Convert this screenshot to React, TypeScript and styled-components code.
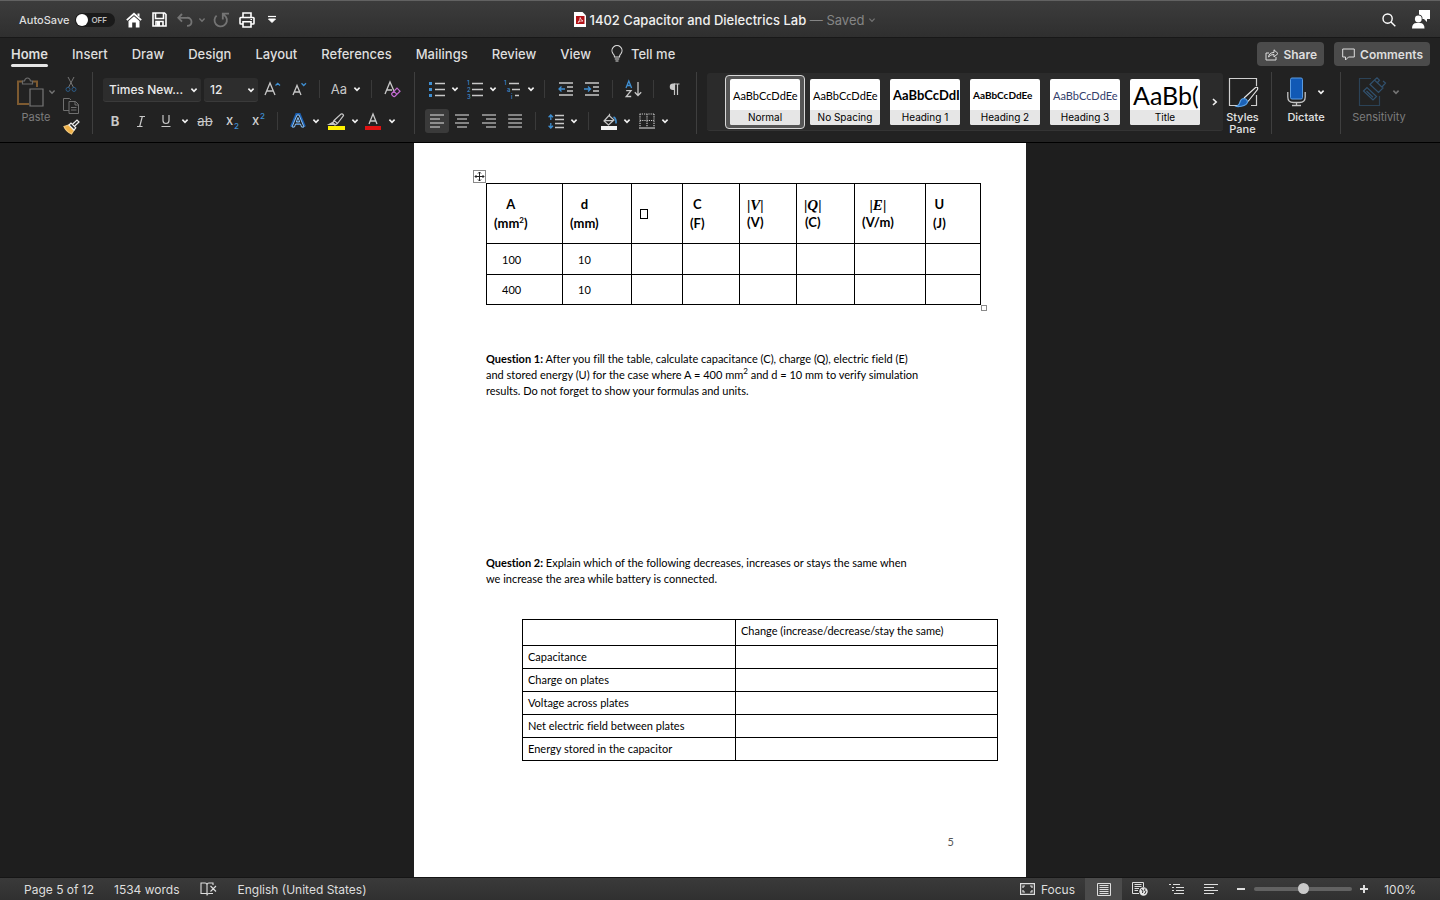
import React from "react";
import styled, { createGlobalStyle, css } from "styled-components";

const GlobalStyle = createGlobalStyle`
  *, *::before, *::after { box-sizing: border-box; }
  body { margin: 0; background: #1e1e1e; }
  button, select, input { font: inherit; color: inherit; margin: 0; }
  button { background: none; border: 0; padding: 0; white-space: nowrap; }
  svg { overflow: visible; flex: none; }
`;

const BLUE = "#3f8fd2";

const Window = styled.div`
  min-height: 100vh;
  display: flex;
  flex-direction: column;
  font-family: Inter, "Liberation Sans", sans-serif;
  color: #dedede;
`;

/* ---------- title bar ---------- */

const TitleBar = styled.header`
  height: 38px;
  display: grid;
  grid-template-columns: 1fr auto 1fr;
  align-items: center;
  padding: 1px 9px 0 19px;
  background: linear-gradient(#3c3c3c, #2f2f2f);
  border-top: 1px solid #626262;
  border-bottom: 1px solid #181818;
`;

const QuickAccess = styled.div`
  display: flex;
  align-items: center;
  gap: 8px;
`;

const AutoSave = styled.label`
  display: flex;
  align-items: center;
  gap: 6px;
  font-size: 11px;
  font-weight: 500;
  margin-right: 2px;
`;

const Toggle = styled.span`
  width: 40px;
  height: 14px;
  padding-left: 1px;
  border-radius: 7px;
  background: #1a1a1a;
  display: flex;
  align-items: center;
  gap: 3px;
  font-size: 8px;
  font-weight: 600;
  color: #c0c0c0;
  &::before {
    content: "";
    width: 12px;
    height: 12px;
    border-radius: 50%;
    background: #fff;
  }
`;

const HiddenCheck = styled.input`
  position: absolute;
  opacity: 0;
  pointer-events: none;
`;

const IconButton = styled.button<{ $w?: number; $dim?: boolean }>`
  width: ${(p) => p.$w ?? 20}px;
  height: 20px;
  display: flex;
  align-items: center;
  justify-content: center;
  color: ${(p) => (p.$dim ? "#747474" : "#ffffff")};
`;

const QuickIcons = styled.div`
  display: flex;
  align-items: center;
`;

const DocTitle = styled.h1`
  margin: 0;
  display: flex;
  align-items: center;
  gap: 4px;
  font-size: 13px;
  font-weight: 500;
  color: #f0f0f0;
  white-space: nowrap;
`;

const Saved = styled.span`
  color: #858585;
  font-weight: 400;
`;

const TitleRight = styled.div`
  display: flex;
  align-items: center;
  justify-content: flex-end;
  gap: 12px;
`;

/* ---------- ribbon ---------- */

const TabBar = styled.nav`
  height: 30px;
  display: flex;
  align-items: flex-start;
  padding: 0 10px 0 11px;
  background: #222;
`;

const TabList = styled.div`
  display: flex;
  gap: 24px;
`;

const Tab = styled.button<{ $active?: boolean }>`
  position: relative;
  height: 31px;
  font-size: 13px;
  font-weight: ${(p) => (p.$active ? 600 : 500)};
  display: flex;
  align-items: center;
  gap: 8px;
  ${(p) =>
    p.$active &&
    css`
      &::after {
        content: "";
        position: absolute;
        inset: auto 0 2px;
        height: 3px;
        border-radius: 2px;
        background: #e6e6e6;
      }
    `}
`;

const TellMe = styled(Tab)`
  margin-left: 20px;
`;

const TabActions = styled.div`
  display: flex;
  gap: 10px;
  margin: 4px 0 0 auto;
`;

const PillButton = styled.button`
  height: 24px;
  padding: 0 7px 0 8px;
  border-radius: 4px;
  background: #4b4b4b;
  font-size: 12px;
  font-weight: 600;
  display: flex;
  align-items: center;
  gap: 5px;
`;

const Ribbon = styled.div`
  height: 75px;
  display: flex;
  align-items: flex-start;
  padding-top: 4px;
  background: #222;
  border-bottom: 1px solid #000;
`;

const GroupLine = styled.div`
  width: 1px;
  height: 62px;
  flex: none;
  background: #3f3f3f;
`;

const PasteGroup = styled.div`
  width: 92px;
  flex: none;
  display: flex;
  justify-content: space-between;
  padding: 0 9px 0 16px;
`;

const BigTool = styled.button<{ $w?: number; $dim?: boolean }>`
  width: ${(p) => (p.$w ? `${p.$w}px` : "auto")};
  flex: none;
  display: flex;
  flex-direction: column;
  align-items: center;
  align-self: flex-start;
  gap: 4px;
  padding-top: 5px;
  font-size: 11px;
  font-weight: ${(p) => (p.$dim ? 400 : 500)};
  line-height: 12px;
  color: ${(p) => (p.$dim ? "#7d7d7d" : "#e4e4e4")};
`;

const IconRow = styled.span<{ $gap?: number }>`
  display: flex;
  align-items: center;
  gap: ${(p) => p.$gap ?? 4}px;
`;

const ClipTools = styled.div`
  display: flex;
  flex-direction: column;
  padding-top: 2px;
`;

const ToolGroup = styled.div<{ $w: number }>`
  width: ${(p) => p.$w}px;
  flex: none;
  padding: 1px 0 0 10px;
`;

const ToolRow = styled.div`
  height: 32px;
  display: flex;
  align-items: center;
`;

const Tool = styled.button<{ $w: number; $on?: boolean }>`
  width: ${(p) => p.$w}px;
  height: 24px;
  flex: none;
  display: flex;
  align-items: center;
  justify-content: center;
  border-radius: 3px;
  font-size: 13px;
  color: #c8c8c8;
  background: ${(p) => (p.$on ? "#3a3a3a" : "none")};
`;

const ClipTool = styled(Tool)`
  height: 21px;
`;

const SmallLine = styled.span<{ $w: number }>`
  width: ${(p) => p.$w}px;
  height: 18px;
  flex: none;
  background: linear-gradient(#3a3a3a, #3a3a3a) center / 1px 100% no-repeat;
`;

const SelectBox = styled.label<{ $w: number }>`
  position: relative;
  width: ${(p) => p.$w}px;
  height: 23px;
  margin-right: 3px;
  flex: none;
  border-radius: 3px;
  background: #2d2d2d;
  box-shadow: 0 1px #3a3a3a;
  &:nth-of-type(2) { margin-right: 0; }
  & > svg {
    position: absolute;
    right: 3px;
    top: 9px;
    pointer-events: none;
  }
`;

const Select = styled.select`
  appearance: none;
  width: 100%;
  height: 100%;
  padding: 0 0 0 6px;
  border: 0;
  background: transparent;
  font-size: 12px;
  font-weight: 500;
  color: #eaeaea;
`;

const Gallery = styled.div`
  flex: 0 1 516px;
  height: 58px;
  margin: 1px 0 0 10px;
  padding: 0 5px 0 18px;
  display: flex;
  align-items: center;
  justify-content: space-between;
  border-radius: 3px;
  background: #2b2b2b;
  border-bottom: 1px solid #343434;
`;

const Cards = styled.div`
  display: flex;
  min-width: 0;
  overflow: hidden;
`;

const StyleCard = styled.button<{ $active?: boolean }>`
  width: 80px;
  height: 54px;
  flex: none;
  padding: 3px;
  border: 1px solid ${(p) => (p.$active ? "#d8d8d8" : "transparent")};
  border-radius: 4px;
  background: ${(p) => (p.$active ? "#555" : "none")};
`;

const CardFace = styled.span`
  height: 46px;
  margin: 0 1px;
  display: flex;
  flex-direction: column;
  border-radius: 2px;
  overflow: hidden;
  background: #fff;
  color: #000;
`;

const Sample = styled.span<{ $size: number; $bold?: boolean; $color?: string }>`
  height: 31px;
  padding-left: 3px;
  overflow: hidden;
  text-align: left;
  line-height: 33px;
  font-family: Lato, sans-serif;
  font-size: ${(p) => p.$size}px;
  font-weight: ${(p) => (p.$bold ? 700 : 400)};
  color: ${(p) => p.$color ?? "#000"};
`;

const CardLabel = styled.span`
  height: 15px;
  background: #e6e6e6;
  font-size: 10px;
  line-height: 15px;
  text-align: center;
`;

const RightTools = styled.div`
  flex: none;
  display: flex;
`;

const StylesPaneTool = styled(BigTool)`
  margin-right: 9px;
`;

/* ---------- document ---------- */

const Desk = styled.main`
  flex: 1;
  display: flex;
  justify-content: center;
  background: #1e1e1e;
`;

const Page = styled.article`
  width: 612px;
  padding: 40px 72px 0;
  background: #fff;
  color: #000;
  font-family: Lato, sans-serif;
  font-size: 11px;
  line-height: 16px;
  font-variant-ligatures: none;
`;

const TableWrap = styled.div`
  position: relative;
  width: 495px;
`;

const MoveHandle = styled.span`
  position: absolute;
  left: -13px;
  top: -13px;
  width: 13px;
  height: 13px;
  border: 1px solid #8a8a8a;
  display: flex;
  background: #fff;
`;

const SizeHandle = styled.span`
  position: absolute;
  right: -6px;
  bottom: -6px;
  width: 6px;
  height: 6px;
  border: 1px solid #8a8a8a;
  background: #fff;
`;

const DataTable = styled.table`
  width: 495px;
  table-layout: fixed;
  border-collapse: collapse;
  th, td { border: 1px solid #000; }
  th {
    height: 60px;
    padding: 1px 0 0 7px;
    text-align: left;
    font-size: 13px;
    line-height: 19px;
  }
  td { height: 31px; padding: 1px 0 0 15px; }
  tr:last-child td { height: 30px; }
`;

const Stack = styled.span<{ $tight?: boolean }>`
  display: inline-block;
  text-align: center;
  vertical-align: middle;
  line-height: ${(p) => (p.$tight ? 17 : 19)}px;
`;

const MathSymbol = styled.span`
  font-family: "Liberation Serif", serif;
  font-size: 15px;
  i { font-weight: 700; }
`;

const Missing = styled.span`
  display: block;
  width: 8px;
  height: 10px;
  margin-left: 1px;
  border: 1px solid #000;
`;

const Question = styled.p<{ $gap: number }>`
  margin: ${(p) => p.$gap}px 0 0;
  white-space: nowrap;
`;

const Sup = styled.sup`
  font-size: 8px;
  line-height: 0;
`;

const ChangeTable = styled.table`
  width: 476px;
  margin: 32px 0 0 36px;
  table-layout: fixed;
  border-collapse: collapse;
  th, td {
    height: 23px;
    padding: 0 5px;
    border: 1px solid #000;
    text-align: left;
    font-weight: 400;
    line-height: 16px;
  }
  thead th { height: 26px; padding-bottom: 4px; }
  tbody tr:nth-child(3) th { height: 22px; }
  tbody tr:last-child th { height: 21px; }
`;

const PageNumber = styled.footer`
  margin-top: 73px;
  text-align: right;
  color: #555;
`;

/* ---------- status bar ---------- */

const StatusBar = styled.footer`
  height: 23px;
  display: flex;
  align-items: center;
  justify-content: space-between;
  padding: 0 24px;
  background: linear-gradient(#3a3a3a, #303030);
  border-top: 1px solid #151515;
  font-size: 12px;
`;

const StatusSide = styled.div<{ $gap?: number }>`
  display: flex;
  align-items: center;
  gap: ${(p) => p.$gap ?? 0}px;
  height: 100%;
`;

const StatusButton = styled.button<{ $w?: number; $on?: boolean }>`
  width: ${(p) => (p.$w ? `${p.$w}px` : "auto")};
  height: 100%;
  display: flex;
  align-items: center;
  justify-content: center;
  gap: 6px;
  background: ${(p) => (p.$on ? "#4b4b4b" : "none")};
`;

const FocusButton = styled(StatusButton)`
  margin-right: 10px;
`;

const Zoom = styled.input`
  appearance: none;
  width: 98px;
  height: 12px;
  background: transparent;
  &::-webkit-slider-runnable-track {
    height: 4px;
    border-radius: 2px;
    background: #626262;
  }
  &::-webkit-slider-thumb {
    appearance: none;
    width: 11px;
    height: 11px;
    margin-top: -4px;
    border-radius: 50%;
    background: #c9c9c9;
  }
`;

const ZoomValue = styled.button`
  width: 40px;
  text-align: right;
`;

/* ---------- icons ---------- */

type IconProps = { w: number; h: number; sw?: number; children: React.ReactNode };

const Icon = ({ w, h, sw = 1, children }: IconProps) => (
  <svg width={w} height={h} viewBox={`0 0 ${w} ${h}`} fill="none" stroke="currentColor" strokeWidth={sw} aria-hidden="true">
    {children}
  </svg>
);

const Chevron = ({ color = "#f0f0f0", sw = 1.6 }: { color?: string; sw?: number }) => (
  <Icon w={8} h={6} sw={sw}>
    <path d="M1.4 1.6 4 4.3 6.6 1.6" stroke={color} />
  </Icon>
);

const Drop = ({ w, label }: { w: number; label: string }) => (
  <Tool $w={w} aria-label={label}>
    <Chevron />
  </Tool>
);

const Lines = ({ rows }: { rows: [number, number][] }) => (
  <Icon w={16} h={16} sw={1.2}>
    {rows.map(([a, b], i) => (
      <path key={i} d={`M${a} ${2 + i * 4}H${b}`} />
    ))}
  </Icon>
);

type LetterProps = { x: number; y: number; size: number; color?: string; children: string };

const Letter = ({ x, y, size, color = BLUE, children }: LetterProps) => (
  <text x={x} y={y} fontSize={size} fontWeight={500} fill={color} stroke="none">
    {children}
  </text>
);

const styleCards = [
  { name: "Normal", sample: "AaBbCcDdEe", size: 11, active: true },
  { name: "No Spacing", sample: "AaBbCcDdEe", size: 11 },
  { name: "Heading 1", sample: "AaBbCcDdI", size: 13, bold: true },
  { name: "Heading 2", sample: "AaBbCcDdEe", size: 10, bold: true },
  { name: "Heading 3", sample: "AaBbCcDdEe", size: 11, color: "#34406b" },
  { name: "Title", sample: "AaBb(", size: 25 },
];

const tabs = ["Home", "Insert", "Draw", "Design", "Layout", "References", "Mailings", "Review", "View"];
const columns = [76, 69, 51, 57, 57, 58, 71, 55];
const changes = ["Capacitance", "Charge on plates", "Voltage across plates", "Net electric field between plates", "Energy stored in the capacitor"];

const ClipboardTools = () => (
  <PasteGroup>
    <BigTool $dim>
      <IconRow>
        <Icon w={28} h={30} sw={1.2}>
          <path d="M7 4.5H2V27H13M17 4.5H21V10" stroke="#7d5a30" strokeWidth="2" />
          <path d="M6.5 7V4H8.5Q9 1 11.5 1T14.5 4H16.5V7Z" stroke="#6a6a6a" />
          <path d="M14 12H27V29H14Z" stroke="#777" />
        </Icon>
        <Chevron color="#747474" sw={1.4} />
      </IconRow>
      Paste
    </BigTool>
    <ClipTools>
      <ClipTool $w={24} aria-label="Cut">
        <Icon w={12} h={15}>
          <path d="M3 0 8.6 10.6M9 0 3.4 10.6" stroke="#777" />
          <circle cx="3" cy="12.4" r="2" stroke="#2c5c88" />
          <circle cx="9" cy="12.4" r="2" stroke="#2c5c88" />
        </Icon>
      </ClipTool>
      <ClipTool $w={24} aria-label="Copy">
        <Icon w={16} h={16}>
          <path d="M6 12.5H.5V.5H6.5L8 2" stroke="#707070" />
          <path d="M6 3.5H12.5L15.5 6.5V15.5H6ZM12 3.5V7H15.5M8 9.5H13.5M8 12H13.5" stroke="#707070" />
        </Icon>
      </ClipTool>
      <ClipTool $w={24} aria-label="Format painter">
        <Icon w={17} h={16} sw={1.2}>
          <path d="M1 7.5 6 6 11 11 8.5 15Q3 12.5 1 7.5Z" fill="#efb046" stroke="#f0c77c" />
          <path d="M6 6 8 4 12.8 8.8 11 11Z" fill="#222" stroke="#eee" />
          <path d="M9.5 5.3 14 1 16 3 11.5 7.3" stroke="#eee" />
        </Icon>
      </ClipTool>
    </ClipTools>
  </PasteGroup>
);

const FontTools = () => (
  <ToolGroup $w={321}>
    <ToolRow>
      <SelectBox $w={98}>
        <Select aria-label="Font" defaultValue="Times New...">
          <option>Times New...</option>
        </Select>
        <Chevron />
      </SelectBox>
      <SelectBox $w={54}>
        <Select aria-label="Font size" defaultValue="12">
          <option>12</option>
        </Select>
        <Chevron />
      </SelectBox>
      <Tool $w={28} aria-label="Increase font size">
        <Icon w={17} h={16} sw={1.3}>
          <path d="M1 14 6 2 11 14M2.8 10H9.2" />
          <path d="M11.5 4.5 13.7 2.3 16 4.5" stroke={BLUE} />
        </Icon>
      </Tool>
      <Tool $w={26} aria-label="Decrease font size">
        <Icon w={15} h={16} sw={1.3}>
          <path d="M1 14 5 4.5 9 14M2.5 11H7.5" />
          <path d="M9.5 2.3 11.7 4.5 14 2.3" stroke={BLUE} />
        </Icon>
      </Tool>
      <SmallLine $w={14} />
      <Tool $w={26} aria-label="Change case">Aa</Tool>
      <Drop w={10} label="Change case options" />
      <SmallLine $w={18} />
      <Tool $w={24} aria-label="Clear formatting">
        <Icon w={17} h={17} sw={1.3}>
          <path d="M1 13 6 1 10 10M2.8 9H8" />
          <path d="M7.7 12.5 13 7.2 16 10.2 10.7 15.5Q9.8 16 9 15L7.7 13.6ZM10 10.4 13 13.4" stroke="#c36ad2" strokeWidth="1.2" />
        </Icon>
      </Tool>
    </ToolRow>
    <ToolRow>
      <Tool $w={24} aria-label="Bold"><b>B</b></Tool>
      <Tool $w={28} aria-label="Italic">
        <Icon w={10} h={13} sw={1.2}><path d="M3.5 1.5H9M1 11.5H6.5M6.3 1.5 3.7 11.5" /></Icon>
      </Tool>
      <Tool $w={22} aria-label="Underline">
        <Icon w={10} h={14} sw={1.2}><path d="M2 1V6.5a3 3 0 0 0 6 0V1M.5 12.5h9" /></Icon>
      </Tool>
      <Drop w={16} label="Underline options" />
      <Tool $w={24} aria-label="Strikethrough"><s>ab</s></Tool>
      <Tool $w={30} aria-label="Subscript">
        <Icon w={14} h={18}>
          <Letter x={1} y={13} size={13} color="#d0d0d0">x</Letter>
          <Letter x={9} y={17} size={8}>2</Letter>
        </Icon>
      </Tool>
      <Tool $w={22} aria-label="Superscript">
        <Icon w={14} h={18}>
          <Letter x={1} y={13} size={13} color="#d0d0d0">x</Letter>
          <Letter x={9} y={7} size={8}>2</Letter>
        </Icon>
      </Tool>
      <SmallLine $w={16} />
      <Tool $w={26} aria-label="Text effects">
        <Icon w={16} h={16}>
          <path d="M2 14 7 2H9L14 14M4.5 10H11.5" stroke="#1c5fb0" strokeWidth="4" />
          <path d="M2 14 7 2H9L14 14H11.5L10.5 11H5.5L4.5 14ZM6.3 9H9.7L8 4.5Z" fill="#222" stroke="#8cc0f0" />
        </Icon>
      </Tool>
      <Drop w={10} label="Text effects options" />
      <Tool $w={30} aria-label="Highlight">
        <Icon w={17} h={17} sw={1.2}>
          <path d="M6 7.5 13 1Q15 .5 15.5 2.5L9.5 10.5ZM6 7.5 4.5 10.5 7 12 9.5 10.5" />
          <path d="M1 11.5 4.5 9.5 7 11.5Z" fill="currentColor" />
          <path d="M0 13H17V17H0Z" fill="#fff200" stroke="none" />
        </Icon>
      </Tool>
      <Drop w={8} label="Highlight colors" />
      <Tool $w={28} aria-label="Font color">
        <Icon w={16} h={17} sw={1.3}>
          <path d="M4 11 8 1 12 11M5.3 8H10.7" />
          <path d="M0 13H16V17H0Z" fill="#e01212" stroke="none" />
        </Icon>
      </Tool>
      <Drop w={10} label="Font colors" />
    </ToolRow>
  </ToolGroup>
);

const ParagraphTools = () => (
  <ToolGroup $w={281}>
    <ToolRow>
      <Tool $w={24} aria-label="Bullets">
        <Icon w={16} h={17} sw={1.3}>
          <path d="M6 2.5H16M6 8.5H16M6 14.5H16" />
          <path d="M0 1H3V4H0ZM0 7H3V10H0ZM0 13H3V16H0Z" fill={BLUE} stroke="none" />
        </Icon>
      </Tool>
      <Drop w={12} label="Bullet options" />
      <Tool $w={28} aria-label="Numbering">
        <Icon w={16} h={17} sw={1.3}>
          <path d="M5 2.5H16M5 8.5H16M5 14.5H16" />
          <Letter x={0} y={4} size={6}>1</Letter>
          <Letter x={0} y={11} size={6}>2</Letter>
          <Letter x={0} y={18} size={6}>3</Letter>
        </Icon>
      </Tool>
      <Drop w={8} label="Numbering options" />
      <Tool $w={30} aria-label="Multilevel list">
        <Icon w={16} h={17} sw={1.3}>
          <path d="M5 2.5H15M8 8.5H16M11 14.5H15" />
          <Letter x={0} y={4} size={6}>1</Letter>
          <Letter x={3} y={11} size={6}>a</Letter>
          <Letter x={7} y={18} size={6}>i</Letter>
        </Icon>
      </Tool>
      <Drop w={8} label="Multilevel options" />
      <SmallLine $w={18} />
      <Tool $w={26} aria-label="Decrease indent">
        <Icon w={16} h={14} sw={1.3}>
          <path d="M1 1H15M9 5H15M9 9H15M1 13H15" />
          <path d="M7 7H1M3.5 4.5 1 7 3.5 9.5" stroke={BLUE} />
        </Icon>
      </Tool>
      <Tool $w={26} aria-label="Increase indent">
        <Icon w={16} h={14} sw={1.3}>
          <path d="M1 1H15M9 5H15M9 9H15M1 13H15" />
          <path d="M0 7H6.5M4 4.5 6.5 7 4 9.5" stroke={BLUE} />
        </Icon>
      </Tool>
      <SmallLine $w={14} />
      <Tool $w={28} aria-label="Sort">
        <Icon w={17} h={18} sw={1.3}>
          <path d="M1 8 3.8 1 6.6 8M2 5.5H5.6" stroke={BLUE} />
          <path d="M1.2 10.7H6L1.2 16.5H6.2M13 2V15.5M9.8 12.3 13 15.5 16.2 12.3" />
        </Icon>
      </Tool>
      <SmallLine $w={12} />
      <Tool $w={30} aria-label="Show formatting marks">
        <Icon w={11} h={13} sw={1.2}>
          <path d="M5.5 12V1H10.5M8.5 1V12" />
          <path d="M6 .5H4a3.2 3.2 0 0 0 0 6.5H6Z" fill="currentColor" stroke="none" />
        </Icon>
      </Tool>
    </ToolRow>
    <ToolRow>
      <Tool $w={24} $on aria-label="Align left"><Lines rows={[[1, 15], [1, 11], [1, 15], [1, 11]]} /></Tool>
      <Tool $w={26} aria-label="Center"><Lines rows={[[1, 15], [3, 13], [1, 15], [3, 13]]} /></Tool>
      <Tool $w={28} aria-label="Align right"><Lines rows={[[1, 15], [5, 15], [1, 15], [5, 15]]} /></Tool>
      <Tool $w={24} aria-label="Justify"><Lines rows={[[1, 15], [1, 15], [1, 15], [1, 15]]} /></Tool>
      <SmallLine $w={16} />
      <Tool $w={26} aria-label="Line spacing">
        <Icon w={16} h={15} sw={1.3}>
          <path d="M7 1.5H16M7 5.5H16M7 9.5H16M7 13.5H16" />
          <path d="M2.8 1V6M.6 3.2 2.8 1 5 3.2M2.8 9V14M.6 11.8 2.8 14 5 11.8" stroke={BLUE} />
        </Icon>
      </Tool>
      <Drop w={10} label="Spacing options" />
      <SmallLine $w={18} />
      <Tool $w={24} aria-label="Shading">
        <Icon w={16} h={17} sw={1.2}>
          <path d="M8 2.5 3 8 7.5 12 13 7 8.5 3V.8M3.5 7.6H12" />
          <path d="M12.5 4Q15.5 5.5 15 10.5" stroke={BLUE} strokeWidth="1.6" />
          <path d="M0 13H16V17H0Z" fill="#f4f4f4" stroke="none" />
        </Icon>
      </Tool>
      <Drop w={12} label="Shading colors" />
      <Tool $w={28} aria-label="Borders">
        <Icon w={16} h={16} sw={1.2}>
          <path d="M.6 1H15.4M1 1V14M15 1V14M8 1V14M1 7.5H15" strokeDasharray="1.2 1" />
          <path d="M0 15H16" />
        </Icon>
      </Tool>
      <Drop w={8} label="Border options" />
    </ToolRow>
  </ToolGroup>
);

const SideTools = () => (
  <RightTools>
    <StylesPaneTool $w={39}>
      <Icon w={30} h={30} sw={1.2}>
        <path d="M10 28.5H1.5V1.5H28.5V9M28.5 18V28.5H23" stroke="#cfcfcf" />
        <path d="M16 21 27.5 10.5Q30.5 9.5 29.5 12.5L20 24.5" stroke="#e6e6e6" fill="#222" />
        <path d="M16 21.5Q19.5 22 19.5 25.5Q17 30 8.5 29.5Q11.5 28 12 25Q13 21.5 16 21.5Z" fill="#1b62b8" stroke="#5da3e6" />
      </Icon>
      <span>Styles<br />Pane</span>
    </StylesPaneTool>
    <GroupLine />
    <BigTool $w={68}>
      <IconRow $gap={10}>
        <Icon w={20} h={30} sw={1.3}>
          <path d="M3.5 2.5Q3.5 1 5 1H14Q15.5 1 15.5 2.5V20.5Q15.5 22 14 22H5Q3.5 22 3.5 20.5Z" fill="#1159b5" stroke="#5a9be0" strokeWidth="1" />
          <path d="M.8 15V20Q.8 25.5 6.5 25.5H12.5Q18.2 25.5 18.2 20V15M9.5 25.5V28.5M5 28.5H14" stroke="#c4c4c4" />
        </Icon>
        <Chevron />
      </IconRow>
      Dictate
    </BigTool>
    <GroupLine />
    <BigTool $w={76} $dim>
      <IconRow $gap={6}>
        <Icon w={28} h={30} sw={1.2}>
          <path d="M13 1.5H1.5V28.5H21.5V19" stroke="#2b4256" />
          <path d="M5.5 14 9 10.5 18.5 19.5 15 23ZM8.5 14 15 20.2" stroke="#31516e" />
          <path d="M12 7.5 16.5 3 25 11 20.5 15.5ZM16.5 3 19 .8 21.5 3.2 19.5 5.5M25 4 27.5 6 24 10" stroke="#31516e" />
        </Icon>
        <Chevron color="#747474" />
      </IconRow>
      Sensitivity
    </BigTool>
  </RightTools>
);

export default function App() {
  return (
    <Window>
      <GlobalStyle />
      <TitleBar>
        <QuickAccess>
          <AutoSave>
            AutoSave
            <HiddenCheck type="checkbox" />
            <Toggle>OFF</Toggle>
          </AutoSave>
          <QuickIcons>
            <IconButton $w={18} aria-label="Home">
              <Icon w={16} h={16}>
                <path d="M.8 8.2 8 1.8 15.2 8.2" strokeWidth="1.8" />
                <path d="M2.5 9 8 4.2 13.5 9V15.5H9.8V10.5H6.2V15.5H2.5ZM11.5 1.5H13.5V5L11.5 3.5Z" fill="currentColor" stroke="none" />
              </Icon>
            </IconButton>
            <IconButton $w={32} aria-label="Save">
              <Icon w={15} h={15} sw={1.6}>
                <path d="M1 1H12.5L14 2.5V14H1Z" />
                <path d="M3.5 1V6.5H11.5V1M4 14V9.5H11V14" />
                <path d="M5 10H8V14H5Z" fill="currentColor" stroke="none" />
              </Icon>
            </IconButton>
            <IconButton $w={20} $dim aria-label="Undo">
              <Icon w={16} h={14} sw={1.8}><path d="M5 1 1.3 4.8 5 8.6M1.5 4.8H10a4 4 0 0 1 4.5 4.2c0 2.2-1.8 3.8-4.5 3.8" /></Icon>
            </IconButton>
            <IconButton $w={14} $dim aria-label="Undo history"><Chevron color="#747474" sw={1.4} /></IconButton>
            <IconButton $w={24} $dim aria-label="Repeat">
              <Icon w={16} h={16} sw={1.8}><path d="M3.6 3.6A6.2 6.2 0 1 0 13 5L10 1.8M16 1.6H9.8V7.5" /></Icon>
            </IconButton>
            <IconButton $w={28} aria-label="Print">
              <Icon w={16} h={16} sw={1.6}>
                <path d="M4 5V1H12V5M4 12H1.8Q1 12 1 11.2V6.3Q1 5.5 1.8 5.5H14.2Q15 5.5 15 6.3V11.2Q15 12 14.2 12H12" />
                <path d="M4 9.8H12V15H4Z" />
                <path d="M11.5 7.5H13" strokeWidth="1" />
              </Icon>
            </IconButton>
            <IconButton $w={22} aria-label="Customize toolbar">
              <Icon w={8} h={9}><path d="M0 1.5H8" strokeWidth="1.2" /><path d="M.5 4H7.5L4 7.5Z" fill="currentColor" /></Icon>
            </IconButton>
          </QuickIcons>
        </QuickAccess>
        <DocTitle>
          <Icon w={12} h={15}>
            <path d="M0 0H8.5L12 3.5V15H0Z" fill="#fff" stroke="none" />
            <path d="M2 4H10.5V12H2Z" fill="#b11217" stroke="none" />
            <path d="M4 10.5Q6.3 8 6.2 5.5Q6.5 8 9 9Q6 8.6 4 10.5Z" stroke="#fff" strokeWidth=".7" />
          </Icon>
          <span>
            1402 Capacitor and Dielectrics Lab <Saved>— Saved</Saved>
          </span>
          <Chevron color="#747474" sw={1.2} />
        </DocTitle>
        <TitleRight>
          <IconButton aria-label="Search">
            <Icon w={14} h={14} sw={1.4}><circle cx="5.6" cy="5.6" r="4.6" /><path d="M9 9 13.3 13.3" /></Icon>
          </IconButton>
          <IconButton aria-label="Account">
            <Icon w={18} h={19}>
              <path d="M7 0H18V9H15V12L12 9H10.5A4.2 4.2 0 0 0 7 4.5Z" fill="currentColor" stroke="none" />
              <circle cx="6.3" cy="9" r="3.4" fill="currentColor" stroke="none" />
              <path d="M0 18.5Q0 13 4.5 13H8Q12.5 13 12.5 18.5Z" fill="currentColor" stroke="none" />
            </Icon>
          </IconButton>
        </TitleRight>
      </TitleBar>

      <TabBar>
        <TabList>
          {tabs.map((t) => (
            <Tab key={t} $active={t === "Home"}>{t}</Tab>
          ))}
        </TabList>
        <TellMe>
          <Icon w={12} h={17} sw={1.1}>
            <path d="M3.5 12Q3.5 10 2 8.6A5 5 0 1 1 10 8.6Q8.5 10 8.5 12ZM3.8 14H8.2M4.5 16H7.5" />
          </Icon>
          Tell me
        </TellMe>
        <TabActions>
          <PillButton>
            <Icon w={13} h={13}>
              <path d="M4 5H1V12H11V9" />
              <path d="M3.5 9Q4 4.5 9 4.5V1.8L13 5.5 9 9V6.5Q5.5 6.3 3.5 9Z" />
            </Icon>
            Share
          </PillButton>
          <PillButton>
            <Icon w={13} h={13}><path d="M.7 1H12.3V9H6.5L3.5 12V9H.7Z" /></Icon>
            Comments
          </PillButton>
        </TabActions>
      </TabBar>

      <Ribbon>
        <ClipboardTools />
        <GroupLine />
        <FontTools />
        <GroupLine />
        <ParagraphTools />
        <GroupLine />
        <Gallery>
          <Cards>
            {styleCards.map((c) => (
              <StyleCard key={c.name} $active={c.active}>
                <CardFace>
                  <Sample $size={c.size} $bold={c.bold} $color={c.color}>{c.sample}</Sample>
                  <CardLabel>{c.name}</CardLabel>
                </CardFace>
              </StyleCard>
            ))}
          </Cards>
          <Icon w={6} h={8} sw={1.6}><path d="M1 1 4.2 4 1 7" stroke="#f0f0f0" /></Icon>
        </Gallery>
        <SideTools />
      </Ribbon>

      <Desk>
        <Page>
          <TableWrap>
            <MoveHandle>
              <Icon w={11} h={11}><path d="M5.5 1V10M1 5.5H10M4 2.5 5.5 1 7 2.5M4 8.5 5.5 10 7 8.5M2.5 4 1 5.5 2.5 7M8.5 4 10 5.5 8.5 7" stroke="#222" /></Icon>
            </MoveHandle>
            <DataTable>
              <colgroup>{columns.map((w, i) => <col key={i} width={w} />)}</colgroup>
              <thead>
                <tr>
                  <th><Stack>A<br />(mm<Sup>2</Sup>)</Stack></th>
                  <th><Stack>d<br />(mm)</Stack></th>
                  <th><Missing /></th>
                  <th><Stack>C<br />(F)</Stack></th>
                  <th><Stack $tight><MathSymbol>|<i>V</i>|</MathSymbol><br />(V)</Stack></th>
                  <th><Stack $tight><MathSymbol>|<i>Q</i>|</MathSymbol><br />(C)</Stack></th>
                  <th><Stack $tight><MathSymbol>|<i>E</i>|</MathSymbol><br />(V/m)</Stack></th>
                  <th><Stack>U<br />(J)</Stack></th>
                </tr>
              </thead>
              <tbody>
                {[100, 400].map((a) => (
                  <tr key={a}>
                    <td>{a}</td><td>10</td><td /><td /><td /><td /><td /><td />
                  </tr>
                ))}
              </tbody>
            </DataTable>
            <SizeHandle />
          </TableWrap>
          <Question $gap={46}>
            <b>Question 1:</b> After you fill the table, calculate capacitance (C), charge (Q), electric field (E)<br />
            and stored energy (U) for the case where A = 400 mm<Sup>2</Sup> and d = 10 mm to verify simulation<br />
            results. Do not forget to show your formulas and units.
          </Question>
          <Question $gap={156}>
            <b>Question 2:</b> Explain which of the following decreases, increases or stays the same when<br />
            we increase the area while battery is connected.
          </Question>
          <ChangeTable>
            <colgroup><col width={213} /><col /></colgroup>
            <thead>
              <tr><th /><th>Change (increase/decrease/stay the same)</th></tr>
            </thead>
            <tbody>
              {changes.map((c) => <tr key={c}><th>{c}</th><td /></tr>)}
            </tbody>
          </ChangeTable>
          <PageNumber>5</PageNumber>
        </Page>
      </Desk>

      <StatusBar>
        <StatusSide $gap={20}>
          <span>Page 5 of 12</span>
          <span>1534 words</span>
          <StatusButton aria-label="Proofing">
            <Icon w={18} h={14} sw={1.1}>
              <path d="M7 11.5H1V1H5Q7 1 7 3V13.5Q7 11.5 9 11.5H13M7 3Q7 1 9 1H13V3M10.5 4 16 9.5M16 4 10.5 9.5" />
            </Icon>
          </StatusButton>
          <span>English (United States)</span>
        </StatusSide>
        <StatusSide>
          <FocusButton>
            <Icon w={15} h={12} sw={1.2}>
              <path d="M.6.6H14.4V11.4H.6Z" />
              <path d="M3 5V3H5M10 3H12V5M12 7V9H10M5 9H3V7" />
            </Icon>
            Focus
          </FocusButton>
          <StatusButton $w={37} $on aria-label="Print layout">
            <Icon w={14} h={13}><path d="M.5.5H13.5V12.5H.5ZM2.5 2.5H11.5M2.5 4.5H11.5M2.5 6.5H11.5M2.5 8.5H11.5M2.5 10.5H11.5" /></Icon>
          </StatusButton>
          <StatusButton $w={36} aria-label="Web layout">
            <Icon w={16} h={14}>
              <path d="M7 11.5H.5V.5H11.5V5M2.5 2.5H9.5M2.5 4.5H9.5M2.5 6.5H7M2.5 8.5H6" />
              <circle cx="11.5" cy="9.5" r="4.2" fill="#e8e8e8" stroke="none" />
              <path d="M9 7.5 11 8.5 10.5 11M13 6.5 12.5 8.5 14 9.5 12.5 12" stroke="#333" />
            </Icon>
          </StatusButton>
          <StatusButton $w={36} aria-label="Outline">
            <Icon w={15} h={12}><path d="M0 1.5H2M4 1.5H11M3 4.5H5M7 4.5H15M3 7.5H5M7 7.5H15M5 10.5H15" strokeWidth="1.2" /></Icon>
          </StatusButton>
          <StatusButton $w={34} aria-label="Draft">
            <Icon w={14} h={12}><path d="M0 1.5H14M0 4.5H10M0 7.5H14M0 10.5H10" strokeWidth="1.2" /></Icon>
          </StatusButton>
          <StatusButton $w={26} aria-label="Zoom out">
            <Icon w={8} h={8} sw={2}><path d="M0 4H8" /></Icon>
          </StatusButton>
          <Zoom type="range" aria-label="Zoom" min={0} max={200} defaultValue={100} />
          <StatusButton $w={24} aria-label="Zoom in">
            <Icon w={8} h={8} sw={2}><path d="M0 4H8M4 0V8" /></Icon>
          </StatusButton>
          <ZoomValue>100%</ZoomValue>
        </StatusSide>
      </StatusBar>
    </Window>
  );
}
